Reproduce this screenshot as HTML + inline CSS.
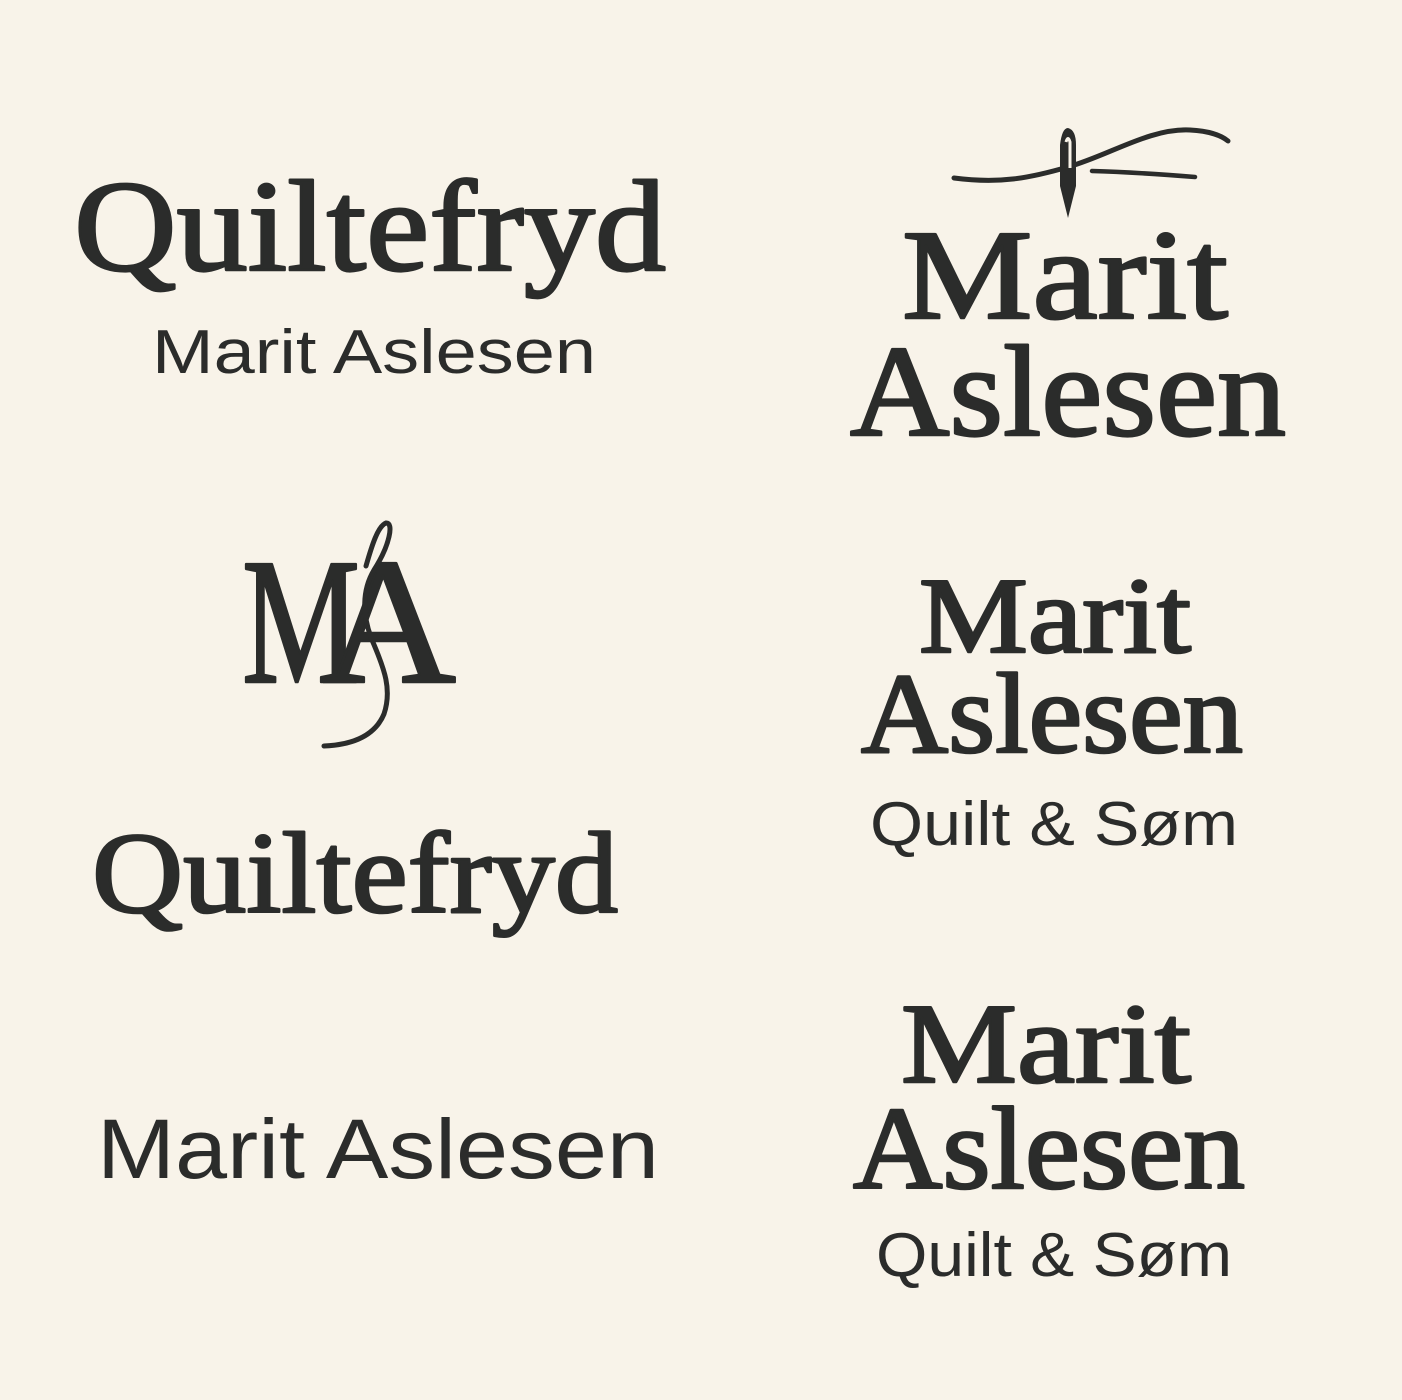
<!DOCTYPE html>
<html><head><meta charset="utf-8"><style>
html,body{margin:0;padding:0;background:#f8f3e9;}
svg{display:block}
.s{font-family:"Liberation Serif",serif;font-weight:normal;fill:#2b2c2b;stroke:#2b2c2b;stroke-width:2.6;stroke-linejoin:round}
.n{font-family:"Liberation Sans",sans-serif;fill:#2b2c2b}
</style></head><body>
<svg width="1402" height="1400" viewBox="0 0 1402 1400" xmlns="http://www.w3.org/2000/svg">
<rect width="1402" height="1400" fill="#f8f3e9"/>
<text class="s" x="74" y="270" font-size="130" textLength="592" lengthAdjust="spacingAndGlyphs">Quiltefryd</text>
<text class="n" x="152" y="373" font-size="62" textLength="444" lengthAdjust="spacingAndGlyphs">Marit Aslesen</text>
<g fill="none" stroke="#2b2c2b" stroke-linecap="round">
<path d="M954,178 C1000,184 1030,178 1068,167 C1110,155 1150,128 1190,130 C1210,131 1222,136 1228,141" stroke-width="5"/>
<path d="M1092,171 C1130,172 1170,175 1195,177" stroke-width="4.5"/>
</g>
<path d="M1068,218 L1060,186 L1060,145 Q1062,128 1068,128 Q1076,130 1076,145 L1076,186 Z" fill="#2b2c2b"/>
<path d="M1066,142 Q1068,135 1070,142 L1070,168" stroke="#f8f3e9" stroke-width="3" fill="none"/>
<text class="s" x="902" y="318" font-size="128" textLength="326" lengthAdjust="spacingAndGlyphs">Marit</text>
<text class="s" x="850" y="435" font-size="130" textLength="436" lengthAdjust="spacingAndGlyphs">Aslesen</text>
<text class="s" x="242" y="682" font-size="180" textLength="118" lengthAdjust="spacingAndGlyphs">M</text>
<text class="s" x="322" y="682" font-size="180" textLength="134" lengthAdjust="spacingAndGlyphs">A</text>
<path d="M366,566 C372,545 378,526 386,523 C394,522 390,545 374,570 C362,590 362,615 372,640 C385,670 392,690 384,714 C374,738 348,745 324,746" fill="none" stroke="#2b2c2b" stroke-width="5" stroke-linecap="round"/>
<text class="s" x="92" y="912" font-size="116" textLength="526" lengthAdjust="spacingAndGlyphs">Quiltefryd</text>
<text class="n" x="97" y="1178" font-size="84" textLength="562" lengthAdjust="spacingAndGlyphs">Marit Aslesen</text>
<text class="s" x="919" y="652" font-size="108" textLength="272" lengthAdjust="spacingAndGlyphs">Marit</text>
<text class="s" x="861" y="752" font-size="114" textLength="382" lengthAdjust="spacingAndGlyphs">Aslesen</text>
<text class="n" x="870" y="845" font-size="62" textLength="368" lengthAdjust="spacingAndGlyphs">Quilt &amp; Søm</text>
<text class="s" x="901" y="1082" font-size="114" textLength="290" lengthAdjust="spacingAndGlyphs">Marit</text>
<text class="s" x="853" y="1188" font-size="118" textLength="392" lengthAdjust="spacingAndGlyphs">Aslesen</text>
<text class="n" x="876" y="1276" font-size="62" textLength="356" lengthAdjust="spacingAndGlyphs">Quilt &amp; Søm</text>
</svg>
</body></html>
